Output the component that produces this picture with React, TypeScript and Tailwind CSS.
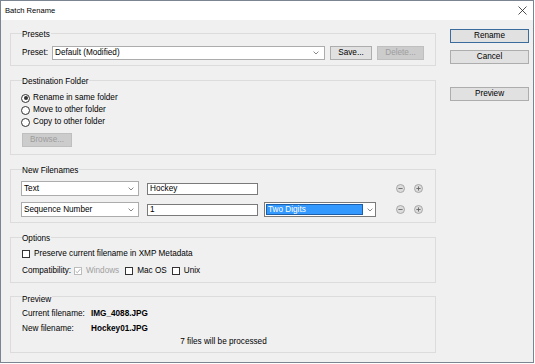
import React from "react";

const Chevron = () => (
  <svg width="6" height="4" viewBox="0 0 6 4" className="shrink-0">
    <path d="M0.6 0.6 L3 3 L5.4 0.6" fill="none" stroke="#7a7a7a" strokeWidth="0.9" />
  </svg>
);

const RoundBtn = ({ plus }: { plus?: boolean }) => (
  <svg width="9" height="9" viewBox="0 0 9 9" className="shrink-0">
    <circle cx="4.5" cy="4.5" r="4" fill="#dcdcdc" stroke="#a0a0a0" strokeWidth="0.9" />
    <path d="M2.4 4.5 H6.6" stroke="#666" strokeWidth="0.9" />
    {plus && <path d="M4.5 2.4 V6.6" stroke="#666" strokeWidth="0.9" />}
  </svg>
);

const Group = ({
  title,
  className,
  labelClass = "-mt-[4px]",
  children,
}: {
  title: string;
  className: string;
  labelClass?: string;
  children: React.ReactNode;
}) => (
  <div className={`flex flex-col border border-[#dcdcdc] pl-[11px] pr-[10px] ${className}`}>
    <div className={`h-[10px] w-fit bg-[#f0f0f0] pr-[1px] ${labelClass}`}>{title}</div>
    {children}
  </div>
);

const Btn = ({
  children,
  className = "",
  disabled,
  primary,
}: {
  children: React.ReactNode;
  className?: string;
  disabled?: boolean;
  primary?: boolean;
}) => (
  <div
    className={`flex h-[14px] shrink-0 items-center justify-center border ${
      disabled
        ? "border-[#bfbfbf] bg-[#cccccc] text-[#9d9d9d]"
        : primary
        ? "border-[#3a6d9e] bg-[#e1e1e1]"
        : "border-[#adadad] bg-[#e1e1e1]"
    } ${className}`}
  >
    {children}
  </div>
);

const Radio = ({ checked, label }: { checked?: boolean; label: string }) => (
  <div className="flex h-[12px] items-center gap-[3px] -ml-[1px]">
    <div className="flex h-[9px] w-[9px] items-center justify-center rounded-full border border-[#333] bg-white">
      {checked && <div className="h-[4px] w-[4px] rounded-full bg-[#333]" />}
    </div>
    <span>{label}</span>
  </div>
);

const Check = ({ checked, disabled }: { checked?: boolean; disabled?: boolean }) => (
  <div
    className={`flex h-[8px] w-[8px] shrink-0 items-center justify-center border bg-white ${
      disabled ? "border-[#bcbcbc]" : "border-[#333]"
    }`}
  >
    {checked && (
      <svg width="6" height="6" viewBox="0 0 6 6">
        <path d="M0.6 3.2 L2.3 4.8 L5.4 1" fill="none" stroke={disabled ? "#a8a8a8" : "#333"} strokeWidth="0.9" />
      </svg>
    )}
  </div>
);

const Select = ({ text, className }: { text: string; className: string }) => (
  <div
    className={`flex h-[15px] shrink-0 items-center justify-between border border-[#acacac] bg-white pl-[2px] pr-[4px] ${className}`}
  >
    <span>{text}</span>
    <Chevron />
  </div>
);

const Field = ({ value }: { value: string }) => (
  <div className="ml-[8px] flex h-[12px] w-[111px] shrink-0 items-center border border-[#7a7a7a] bg-white pl-[2px]">
    {value}
  </div>
);

export default function App() {
  return (
    <div className="flex h-[363px] w-[534px] flex-col border border-[#7a8591] bg-[#f0f0f0] font-['Liberation_Sans',Arial,sans-serif] text-[8.2px] leading-[10px] text-black">
      {/* title bar */}
      <div className="flex h-[19px] shrink-0 items-center justify-between bg-white pl-[4px] pr-[6px]">
        <span className="text-[7.6px]">Batch Rename</span>
        <svg width="9" height="9" viewBox="0 0 9 9">
          <path d="M0.5 0.5 L8.5 8.5 M8.5 0.5 L0.5 8.5" stroke="#222" strokeWidth="0.8" />
        </svg>
      </div>

      <div className="flex">
        <div className="ml-[9px] flex w-[426px] flex-col pt-[13px]">
          <Group title="Presets" className="h-[33px]">
            <div className="mt-[6px] flex h-[14px] items-center">
              <span className="w-[30px] shrink-0">Preset:</span>
              <Select text="Default (Modified)" className="!h-[14px] w-[273px] pr-[5px]" />
              <Btn className="ml-[5px] w-[42px]">Save...</Btn>
              <Btn disabled className="ml-[5px] w-[47px]">
                Delete...
              </Btn>
            </div>
          </Group>

          <Group title="Destination Folder" className="mt-[14px] h-[75px]">
            <div className="mt-[5px] flex flex-col">
              <Radio checked label="Rename in same folder" />
              <Radio label="Move to other folder" />
              <Radio label="Copy to other folder" />
            </div>
            <Btn disabled className="mt-[5px] w-[50px]">
              Browse...
            </Btn>
          </Group>

          <Group title="New Filenames" className="mt-[14px] h-[54px]">
            <div className="mt-[5px] flex h-[15px] items-center">
              <Select text="Text" className="-ml-[1px] w-[118px]" />
              <Field value="Hockey" />
              <div className="w-[118px] shrink-0" />
              <div className="ml-[20px] flex items-center gap-[9px]">
                <RoundBtn />
                <RoundBtn plus />
              </div>
            </div>
            <div className="mt-[6px] flex h-[15px] items-center">
              <Select text="Sequence Number" className="-ml-[1px] w-[118px]" />
              <Field value="1" />
              <div className="ml-[6px] flex h-[15px] w-[112px] shrink-0 items-center border border-[#7a7a7a] bg-white">
                <div className="m-[1px] flex h-[11px] flex-1 items-center border border-[#1d5ea8] bg-[#3399ff] pl-[1px] text-white">
                  Two Digits
                </div>
                <div className="flex w-[11px] justify-center">
                  <Chevron />
                </div>
              </div>
              <div className="ml-[20px] flex items-center gap-[9px]">
                <RoundBtn />
                <RoundBtn plus />
              </div>
            </div>
          </Group>

          <Group title="Options" className="mt-[14px] h-[46px]">
            <div className="mt-[5px] flex h-[10px] items-center gap-[4px]">
              <Check />
              <span>Preserve current filename in XMP Metadata</span>
            </div>
            <div className="mt-[7px] flex h-[10px] items-center">
              <span className="w-[52px] shrink-0">Compatibility:</span>
              <Check checked disabled />
              <span className="ml-[4px] text-[#a0a0a0]">Windows</span>
              <div className="ml-[6px]">
                <Check />
              </div>
              <span className="ml-[4px]">Mac OS</span>
              <div className="ml-[5px]">
                <Check />
              </div>
              <span className="ml-[4px]">Unix</span>
            </div>
          </Group>

          <Group title="Preview" className="mt-[13px] h-[57px]" labelClass="-mt-[2px]">
            <div className="mt-[4px] flex h-[10px] items-center">
              <span className="w-[69px] shrink-0">Current filename:</span>
              <span className="font-bold">IMG_4088.JPG</span>
            </div>
            <div className="mt-[5px] flex h-[10px] items-center">
              <span className="w-[69px] shrink-0">New filename:</span>
              <span className="font-bold">Hockey01.JPG</span>
            </div>
            <div className="mt-[3px] h-[10px] text-center">7 files will be processed</div>
          </Group>
        </div>

        <div className="ml-[14px] flex w-[79px] flex-col pt-[9px]">
          <Btn primary className="w-[79px]">
            Rename
          </Btn>
          <Btn className="mt-[7px] w-[79px]">Cancel</Btn>
          <Btn className="mt-[23px] w-[79px]">Preview</Btn>
        </div>
      </div>
    </div>
  );
}
